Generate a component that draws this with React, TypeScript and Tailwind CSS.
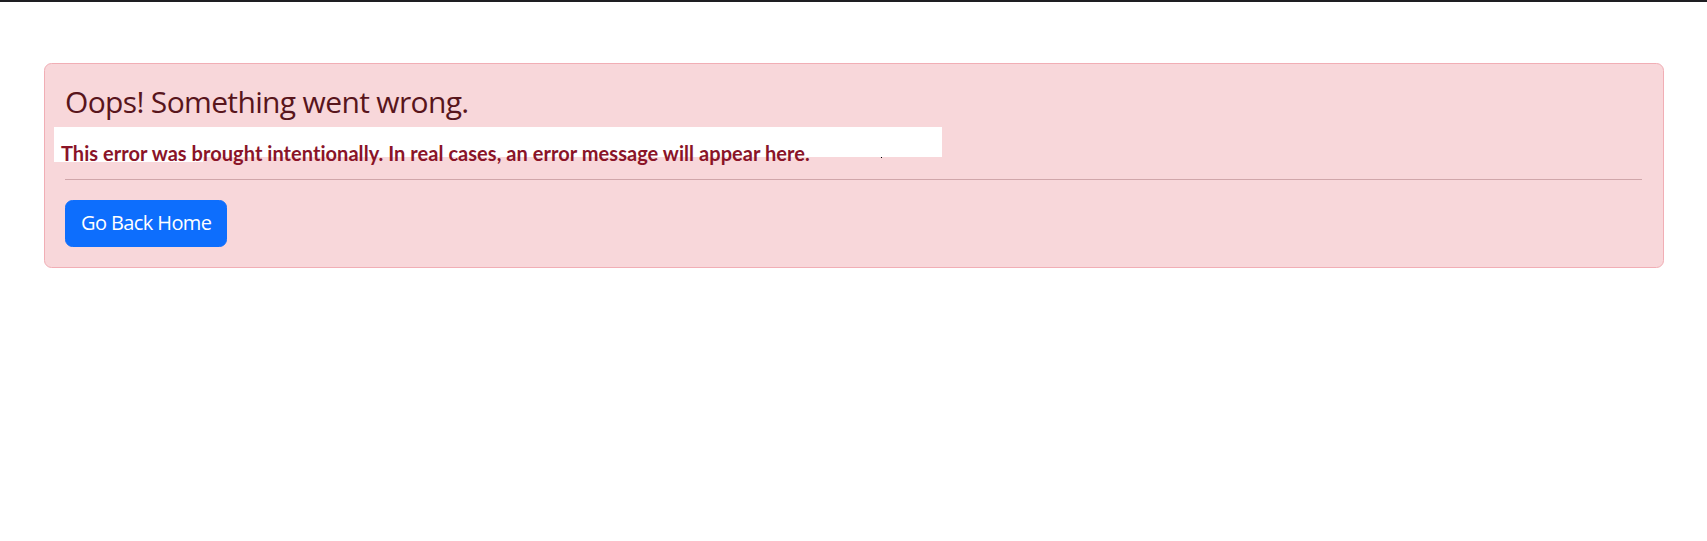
import React from "react";

export default function App() {
  return (
    <div className="min-h-screen bg-white" style={{ fontFamily: '"Open Sans", "Noto Sans", sans-serif' }}>
      <div className="h-[2px] bg-[#1e1e22]" />
      <div className="px-[43.5px] pt-[60.7px]">
        <div className="rounded-[7.5px] border border-[#f1aeb5] bg-[#f8d7da] px-[20.5px] py-[20px] text-[#58151c]">
          <h4 className="mb-[10px] text-[30px] font-normal leading-[36px] tracking-[-0.65px] text-[#58151c]">
            Oops! Something went wrong.
          </h4>
          <div className="relative -ml-[11px] -mt-[2.5px] h-[29.5px] w-[888px] bg-white">
            <div className="absolute left-0 top-[29.5px] h-[5px] w-[149px] bg-white" />
            <div className="absolute left-[827px] top-[30px] h-[1px] w-[1px] bg-black" />
            <p
              className="relative whitespace-nowrap pl-[7px] pt-[13.5px] text-[20px] font-bold leading-[24px] tracking-[0.05px] text-[#8a1428]"
              style={{ fontFamily: 'Lato, "Open Sans", sans-serif' }}
            >
              This error was brought intentionally. In real cases, an error message will appear here.
            </p>
          </div>
          <hr className="mb-[20px] mt-[22px] border-0 border-t border-[#d0a6aa]" />
          <button className="rounded-[7.5px] border border-[#0d6efd] bg-[#0d6efd] px-[15px] py-[7.5px] text-[20px] leading-[30px] tracking-[-0.6px] text-white">
            Go Back Home
          </button>
        </div>
      </div>
    </div>
  );
}
